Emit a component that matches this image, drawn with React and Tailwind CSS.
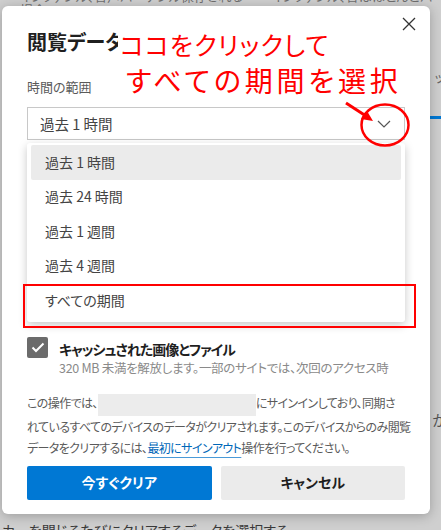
import React from "react";

const jp = "font-['Noto_Sans_CJK_JP','Noto_Sans',sans-serif] [font-feature-settings:'palt']";

const ranges = ["過去 1 時間", "過去 24 時間", "過去 1 週間", "過去 4 週間", "すべての期間"];

// --- CLEAR BROWSING DATA (annotated screenshot) ---
const App = () => {
  return (
    <div className={`relative w-[441px] h-[530px] overflow-hidden bg-[#cfcfcf] ${jp}`}>
      {/* dimmed page behind the dialog */}
      <div className="flex h-full flex-col">
        <div className="mt-[-11px] flex items-center gap-6 pl-[20px] text-[13px] leading-[14px] text-[#6f6f6f]">
          <span>インファンル、音声バーテンル保存される場合</span>
          <span>インファンル、音はほとんどバーテ</span>
        </div>
        <div className="mt-[52px] flex justify-end text-[13px] leading-[16px] text-[#666]">
          <span className="mr-[-4px]">ッ</span>
        </div>
        <div className="mt-[31px] ml-auto h-[3px] w-[12px] bg-[#0078d4]" />
        <div className="mt-[292px] flex justify-end text-[15px] leading-[18px] text-[#555]">
          <span className="mr-[-6px]">が</span>
        </div>
        <div className="mt-auto mb-[-9px] pl-[2px] text-[14px] leading-[18px] text-[#3a3a3a]">
          カーを閉じるたびにクリアするデータを選択する
        </div>
      </div>

      {/* modal dialog */}
      <div className="absolute left-[2px] top-[6px] flex h-[508px] w-[428px] flex-col rounded-[6px] bg-white px-[25px] shadow-[0_2px_12px_rgba(0,0,0,0.25)]">
        <div className="flex items-start justify-between pt-[10px]">
          <h2 className="mt-[12px] text-[20px] font-bold leading-[28px] text-[#1f1f1f]">閲覧データをクリア</h2>
          <button className="mr-[-11px] mt-[1px] text-[#333]">
            <svg width="14" height="14" viewBox="0 0 14 14" fill="none" stroke="currentColor" strokeWidth="1.3">
              <path d="M1 1L13 13M13 1L1 13" />
            </svg>
          </button>
        </div>

        <div className="mt-[21px] text-[13px] leading-[20px] text-[#5a5a5a]">時間の範囲</div>

        <div className="mt-[10px] flex h-[33px] w-full items-center justify-between border border-[#c8c8c8] pl-[12px] pr-[13px] text-[14.5px] text-[#444]">
          <span>過去 1 時間</span>
          <svg width="14" height="8" viewBox="0 0 14 8" fill="none" stroke="#555" strokeWidth="1.2">
            <path d="M1 1L7 7L13 1" />
          </svg>
        </div>

        <div className="mt-[197px] flex gap-[11px]">
          <div className="flex h-[21px] w-[21px] shrink-0 items-center justify-center rounded-[2px] bg-[#6b6b6b]">
            <svg width="14" height="11" viewBox="0 0 14 11" fill="none" stroke="white" strokeWidth="2">
              <path d="M1.5 5.5L5 9L12.5 1.5" />
            </svg>
          </div>
          <div className="mt-[2px] flex flex-col">
            <span className="text-[14px] font-bold leading-[20px] tracking-[-1px] text-[#1f1f1f]">キャッシュされた画像とファイル</span>
            <span className="whitespace-nowrap text-[12.5px] leading-[18px] tracking-[-0.3px] text-[#8a8a8a]">
              320 MB 未満を解放します。一部のサイトでは、次回のアクセス時
            </span>
          </div>
        </div>

        <p className="mt-[15px] whitespace-nowrap text-[12px] leading-[21px] tracking-[-0.6px] text-[#5a5a5a]">
          この操作では、
          <span className="inline-block h-[22px] w-[158px] bg-[#ececec] align-middle" />
          にサインインしており、同期さ
          <br />
          れているすべてのデバイスのデータがクリアされます。このデバイスからのみ閲覧
          <br />
          データをクリアするには、
          <span className="text-[#0067b8] underline decoration-[#4a9ad8] underline-offset-[4px]">最初にサインアウト</span>
          操作を行ってください。
        </p>

        <div className="mt-[8px] grid grid-cols-2 gap-[9px]">
          <button className="h-[34px] rounded-[2px] bg-[#0078d4] text-[14px] font-bold text-white">今すぐクリア</button>
          <button className="h-[34px] rounded-[2px] bg-[#ebebeb] text-[14px] font-bold text-[#1f1f1f]">キャンセル</button>
        </div>

        {/* open dropdown list */}
        <div className="absolute left-[25px] top-[137px] flex h-[179px] w-[378px] flex-col rounded-[3px] bg-white px-[4px] pt-[2px] shadow-[0_3px_10px_rgba(0,0,0,0.22)]">
          {ranges.map((r, i) => (
            <div
              key={r}
              className={`flex h-[34.5px] items-center rounded-[2px] pl-[14px] text-[14px] text-[#444] ${i === 0 ? "bg-[#ebebeb]" : ""}`}
            >
              {r}
            </div>
          ))}
        </div>

        {/* red highlight frame */}
        <div className="absolute left-[21px] top-[278px] h-[44px] w-[393px] border-2 border-[#ff0000]" />
      </div>

      {/* annotation */}
      <div className="absolute left-[118px] top-[28px] bg-white pl-[2px] pr-[4px] text-[25px] leading-[32px] tracking-[1.2px] text-[#ff0000]">
        ココをクリックして
      </div>
      <div className="absolute left-[126px] top-[63px] text-[28px] leading-[34px] tracking-[3.8px] text-[#ff0000]">
        すべての期間を選択
      </div>
      <svg className="absolute left-0 top-0" width="441" height="530" fill="none">
        <ellipse cx="385" cy="125" rx="23.5" ry="20.5" stroke="#ff0000" strokeWidth="2.5" />
        <path d="M346 103L366 116" stroke="#ff0000" strokeWidth="3" />
        <path d="M373 121L361 119L367 111Z" fill="#ff0000" />
      </svg>
    </div>
  );
};

export default App;
